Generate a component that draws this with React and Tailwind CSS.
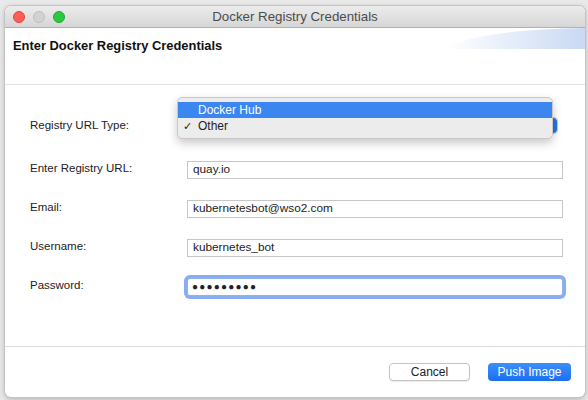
import React from "react";

const font = { fontFamily: '"Liberation Sans", Arial, sans-serif' };

function Field({ label, value, focused }) {
    return (
        <div className="flex items-center h-[18px]">
            <div className="w-[182px] pl-[25px] text-[11.5px] text-[#222] -mt-[3px]">{label}</div>
            {focused ? (
                <div className="w-[376px] h-[18px] rounded-[3px] ring-[3px] ring-[#86aef0] border border-[#8fb2ea] bg-white flex items-center pl-[4px]">
                    <span className="text-[10px] tracking-[1.2px] text-[#222] leading-none">{value}</span>
                </div>
            ) : (
                <div className="w-[376px] h-[18px] border border-[#c6c6c6] bg-white flex items-center pl-[5px] text-[11.8px] text-[#222]">
                    {value}
                </div>
            )}
        </div>
    );
}

export default function App() {
    return (
        <div style={font} className="w-[588px] h-[400px] bg-[#e9e9e9] pt-[6px] pl-[5px] overflow-hidden">
            <div className="relative w-[580px] h-[391px] bg-white rounded-[6px] shadow-[0_0_0_1px_#c4c4c4,0_2px_6px_rgba(0,0,0,0.25)] overflow-hidden flex flex-col">
                {/* title bar */}
                <div className="relative h-[22px] shrink-0 bg-gradient-to-b from-[#ececec] to-[#d6d6d6] border-b border-[#b1b1b1] flex items-center justify-center">
                    <div className="absolute left-[8px] top-[5px] flex gap-[8px]">
                        <span className="w-[12px] h-[12px] rounded-full bg-[#fc5f57] border border-[#e0463e]" />
                        <span className="w-[12px] h-[12px] rounded-full bg-[#d2d2d2] border border-[#bcbcbc]" />
                        <span className="w-[12px] h-[12px] rounded-full bg-[#2bc840] border border-[#1fab32]" />
                    </div>
                    <span className="text-[13.3px] text-[#4c4c4c]">Docker Registry Credentials</span>
                </div>

                {/* header */}
                <div className="relative h-[57px] shrink-0 border-b border-[#e2e2e2] pl-[8px] pt-[8px]">
                    <svg className="absolute right-0 top-0" width="140" height="21" viewBox="0 0 140 21">
                        <defs>
                            <linearGradient id="sw" x1="0" y1="0" x2="1" y2="0">
                                <stop offset="0" stopColor="#ffffff" />
                                <stop offset="1" stopColor="#c9d9f3" />
                            </linearGradient>
                        </defs>
                        <path d="M0 21 C 20 8, 70 1, 140 0 L 140 21 Z" fill="url(#sw)" />
                    </svg>
                    <div className="text-[12.9px] font-bold text-[#111]">Enter Docker Registry Credentials</div>
                </div>

                {/* form */}
                <div className="relative h-[262px] shrink-0 border-b border-[#dcdcdc] pt-[32px] flex flex-col">
                    <div className="flex items-center h-[17px]">
                        <div className="w-[182px] pl-[25px] text-[11.5px] text-[#222]">Registry URL Type:</div>
                        <div className="w-[371px] h-[17px] rounded-[4px] bg-white border border-[#c6c6c6] flex justify-end">
                            <div className="w-[16px] h-full rounded-r-[4px] bg-[#2a72e6]" />
                        </div>
                    </div>
                    <div className="mt-[27px] flex flex-col gap-[21px]">
                        <Field label="Enter Registry URL:" value="quay.io" />
                        <Field label="Email:" value="kubernetesbot@wso2.com" />
                        <Field label="Username:" value="kubernetes_bot" />
                        <Field label="Password:" value="●●●●●●●●●" focused />
                    </div>

                    {/* open popup menu */}
                    <div className="absolute left-[172px] top-[12px] w-[376px] h-[42px] rounded-[5px] bg-[#ececec] border border-[#c9c9c9] shadow-[0_4px_10px_rgba(0,0,0,0.22)] pt-[4px] text-[12px]">
                        <div className="h-[16px] bg-[#3b86ef] text-white flex items-center pl-[20px]">Docker Hub</div>
                        <div className="h-[16px] text-[#222] flex items-center relative pl-[20px]">
                            <span className="absolute left-[5px] text-[11px]">✓</span>
                            Other
                        </div>
                    </div>
                </div>

                {/* buttons */}
                <div className="flex-1 flex items-start justify-end gap-[18px] pt-[16px] pr-[14px]">
                    <button className="w-[81px] h-[18px] rounded-[4px] bg-white border border-[#c4c4c4] shadow-[0_1px_1px_rgba(0,0,0,0.08)] text-[12px] text-[#222] leading-none">
                        Cancel
                    </button>
                    <button className="w-[83px] h-[18px] rounded-[4px] bg-gradient-to-b from-[#3d8ff9] to-[#1a6ff0] text-[12px] text-white leading-none">
                        Push Image
                    </button>
                </div>
            </div>
        </div>
    );
}
